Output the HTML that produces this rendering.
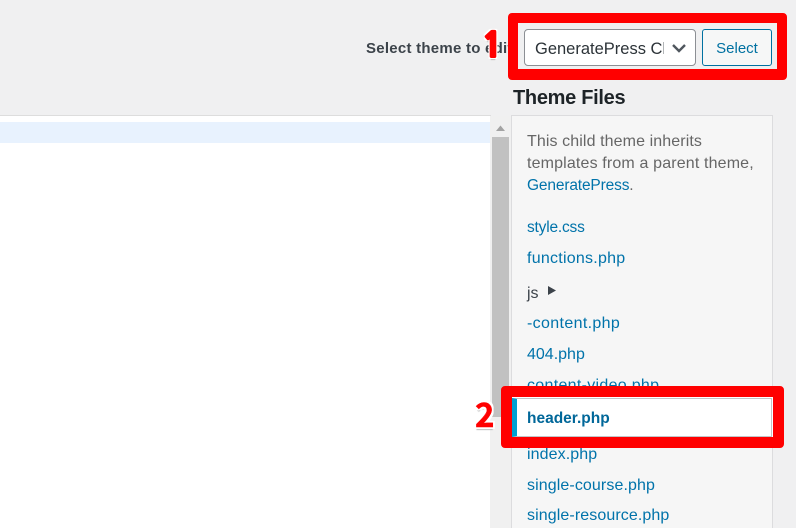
<!DOCTYPE html>
<html><head><meta charset="utf-8"><style>
html,body{margin:0;padding:0}
body{width:796px;height:528px;overflow:hidden;position:relative;background:#f0f0f1;font-family:"Liberation Sans",sans-serif;color:#3c434a}
.a{position:absolute}
.t{position:absolute;white-space:nowrap;font-size:16px;line-height:20px;color:#0073aa}
.num{position:absolute;font-family:"Noto Sans CJK JP",sans-serif;font-weight:700;font-size:33px;line-height:36px;color:#f00;-webkit-text-stroke:.5px #f00;text-shadow:-2px 0 0 #fff,2px 0 0 #fff,0 -2px 0 #fff,0 2px 0 #fff,-2px -2px 0 #fff,2px -2px 0 #fff,-2px 2px 0 #fff,2px 2px 0 #fff,0 3px 1px #bbb}
</style></head><body>
<div class="a" style="left:0;top:115px;width:491px;height:413px;background:#fff;border-top:1px solid #ddd;box-sizing:border-box"></div>
<div class="a" style="left:0;top:122px;width:490px;height:21px;background:#e8f2fe"></div>
<div class="a" style="left:490px;top:116px;width:21px;height:412px;background:#f0f0f0"></div>
<div class="a" style="left:492px;top:137px;width:17px;height:280px;background:#c1c1c1"></div>
<svg class="a" style="left:495px;top:124px" width="11" height="8"><path d="M1 7L5.500 1.500L10 7Z" fill="#a3a3a3"/></svg>
<div class="a" style="left:511px;top:115px;width:262px;height:413px;background:#f6f6f6;border:1px solid #dcdcde;border-bottom:0;box-sizing:border-box"></div>

<div class="t" style="left:366px;top:39px;font-size:15px;color:#3c434a;font-weight:700;letter-spacing:.25px">Select theme to edit:</div>
<div class="t" style="left:513px;top:86px;font-size:20px;line-height:24px;font-weight:700;color:#1d2327;letter-spacing:-.3px">Theme Files</div>

<div class="t" style="left:527px;top:132px;color:#666;letter-spacing:.1px">This child theme inherits</div>
<div class="t" style="left:527px;top:154px;color:#666;letter-spacing:.15px">templates from a parent theme,</div>
<div class="t" style="left:527px;top:176px;font-size:15.500px;letter-spacing:-.15px">GeneratePress<span style="color:#666">.</span></div>
<div class="t" style="left:527px;top:218px;font-size:15.500px;letter-spacing:-.2px">style.css</div>
<div class="t" style="left:527px;top:249px;letter-spacing:.25px">functions.php</div>
<div class="t" style="left:527px;top:284px;color:#3c434a">js</div>
<svg class="a" style="left:548px;top:286px" width="8" height="10"><path d="M0 0L8 4.500L0 9Z" fill="#3c434a"/></svg>
<div class="t" style="left:527px;top:314px;letter-spacing:.35px">-content.php</div>
<div class="t" style="left:527px;top:345px">404.php</div>
<div class="t" style="left:527px;top:376px;letter-spacing:.3px">content-video.php</div>
<div class="t" style="left:527px;top:445px;letter-spacing:.1px">index.php</div>
<div class="t" style="left:527px;top:476px;letter-spacing:.1px">single-course.php</div>
<div class="t" style="left:527px;top:506px;letter-spacing:.1px">single-resource.php</div>

<!-- red box 1 -->
<div class="a" style="left:508px;top:13px;width:279px;height:67px;box-sizing:border-box;border:10px solid #f00;border-bottom-width:11px;border-radius:4px;background:#f0f0f1"></div>
<div class="a" style="left:524px;top:29px;width:172px;height:37px;box-sizing:border-box;background:#fff;border:1px solid #8c8f94;border-radius:4px;overflow:hidden">
<div class="a" style="left:10px;top:9px;width:129px;overflow:hidden;white-space:nowrap;font-size:16.500px;line-height:20px;color:#2c3338">GeneratePress Child</div>
<svg class="a" style="left:146px;top:12px" width="16" height="12"><path d="M2 3L8 9L14 3" fill="none" stroke="#50575e" stroke-width="2.400"/></svg>
</div>
<div class="a" style="left:702px;top:29px;width:70px;height:37px;box-sizing:border-box;background:#f6f7f7;border:1px solid #0071a1;border-radius:3px;color:#0071a1;font-size:15px;line-height:37px;text-align:center">Select</div>
<div class="num" style="left:482px;top:27px;font-family:NanumGothic,'WenQuanYi Zen Hei',sans-serif;font-weight:800;font-size:34px;-webkit-text-stroke:2px #f00">1</div>

<!-- red box 2 -->
<div class="a" style="left:501px;top:386px;width:283px;height:62px;box-sizing:border-box;border:11px solid #f00;border-radius:4px;background:#fff"></div>
<div class="a" style="left:512px;top:398px;width:260px;height:39px;box-sizing:border-box;background:#fff;border:1px solid #c3c4c7;border-left:5px solid #00a0d2"></div>
<div class="t" style="left:527px;top:409px;font-weight:700;color:#006799;font-size:15.500px">header.php</div>
<div class="num" style="left:475px;top:395px">2</div>
</body></html>
